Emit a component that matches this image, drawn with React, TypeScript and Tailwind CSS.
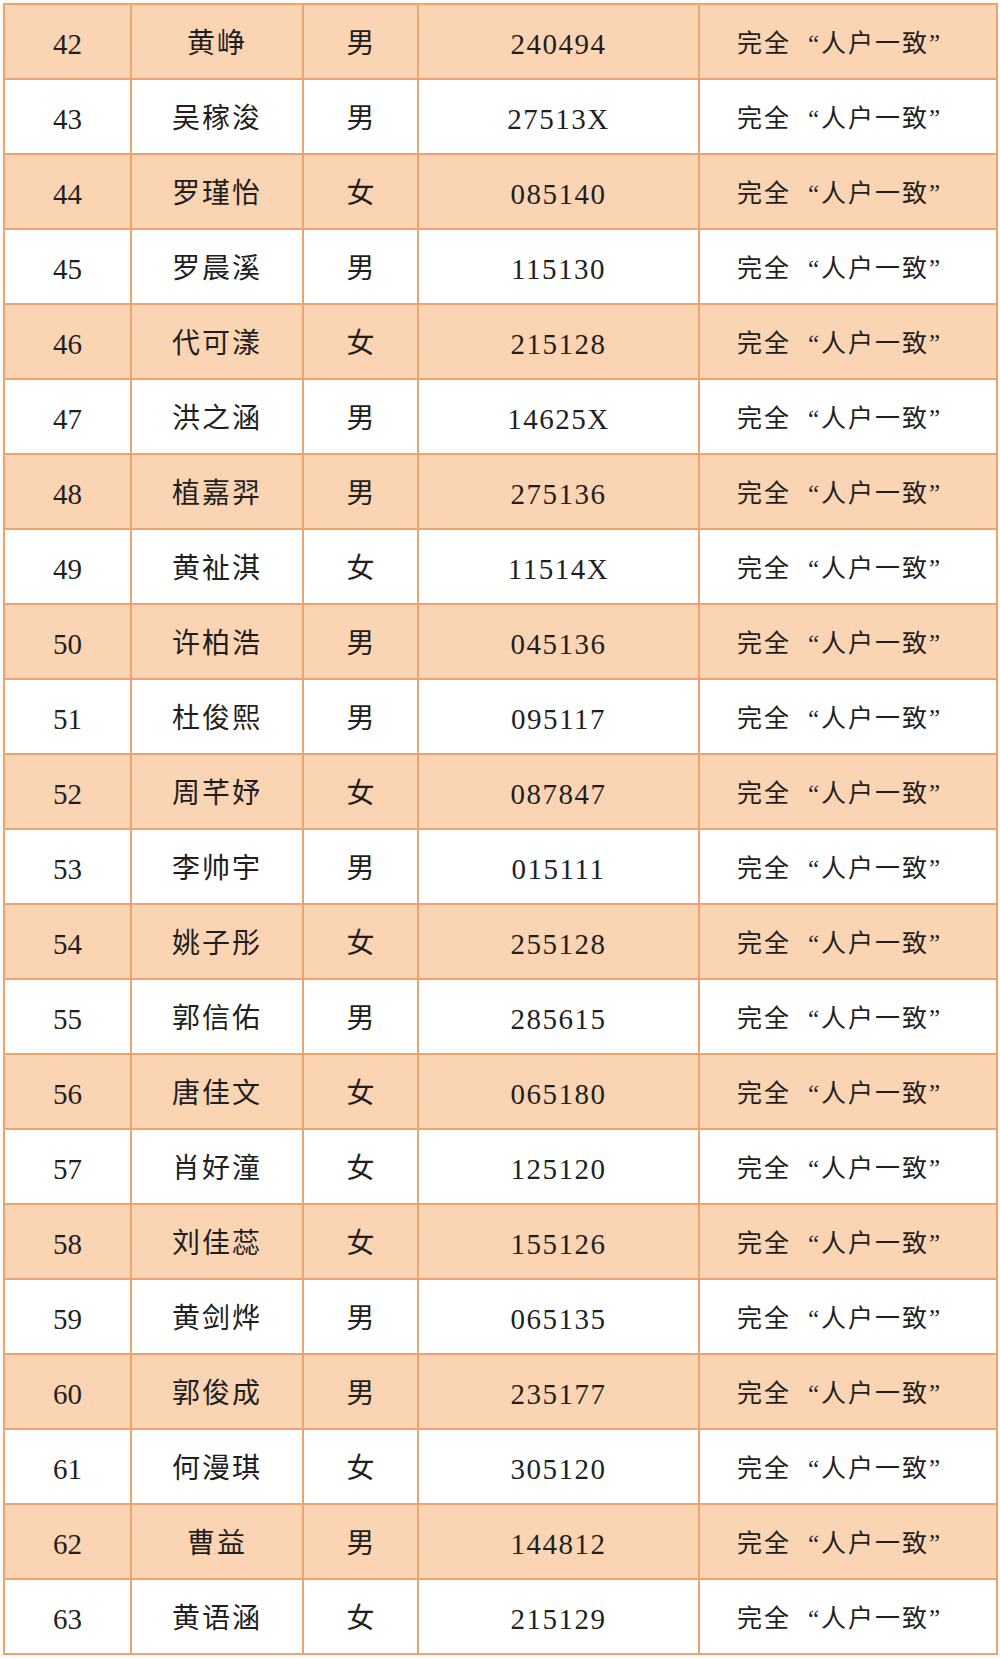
const rows: [string, string, string, string][] = [
  ["42", "黄峥", "男", "240494"],
  ["43", "吴稼浚", "男", "27513X"],
  ["44", "罗瑾怡", "女", "085140"],
  ["45", "罗晨溪", "男", "115130"],
  ["46", "代可漾", "女", "215128"],
  ["47", "洪之涵", "男", "14625X"],
  ["48", "植嘉羿", "男", "275136"],
  ["49", "黄祉淇", "女", "11514X"],
  ["50", "许柏浩", "男", "045136"],
  ["51", "杜俊熙", "男", "095117"],
  ["52", "周芊妤", "女", "087847"],
  ["53", "李帅宇", "男", "015111"],
  ["54", "姚子彤", "女", "255128"],
  ["55", "郭信佑", "男", "285615"],
  ["56", "唐佳文", "女", "065180"],
  ["57", "肖好潼", "女", "125120"],
  ["58", "刘佳蕊", "女", "155126"],
  ["59", "黄剑烨", "男", "065135"],
  ["60", "郭俊成", "男", "235177"],
  ["61", "何漫琪", "女", "305120"],
  ["62", "曹益", "男", "144812"],
  ["63", "黄语涵", "女", "215129"],
];

const font = { fontFamily: '"Liberation Serif", "Noto Sans CJK SC", serif' };

export default function App() {
  return (
    <div className="min-h-[1658px] w-[1000px] bg-[#fffaf6] px-[3px] pt-[3px]" style={font}>
      <table className="w-[993px] table-fixed border-collapse text-[#1f1f1f]">
        <colgroup>
          <col className="w-[127px]" />
          <col className="w-[172px]" />
          <col className="w-[115px]" />
          <col className="w-[281px]" />
          <col className="w-[298px]" />
        </colgroup>
        <tbody>
          {rows.map((r, i) => (
            <tr key={r[0]} className={i % 2 === 0 ? "h-[75px] bg-[#fbd4b4]" : "h-[75px] bg-white"}>
              <td className="border-2 border-[#eba370] pt-[6px] text-center text-[29px] leading-none">{r[0]}</td>
              <td className="border-2 border-[#eba370] pt-[4px] text-center text-[28px] leading-none tracking-[2px]">{r[1]}</td>
              <td className="border-2 border-[#eba370] pt-[4px] text-center text-[28px] leading-none">{r[2]}</td>
              <td className="border-2 border-[#eba370] pt-[6px] text-center text-[29px] leading-none tracking-[1.5px]">{r[3]}</td>
              <td className="border-2 border-[#eba370] pt-[4px] text-center text-[25px] leading-none tracking-[2px]">
                完全<span className="inline-block w-[30px] text-right">“</span>人户一致<span className="inline-block w-[30px] text-left">”</span>
              </td>
            </tr>
          ))}
        </tbody>
      </table>
    </div>
  );
}
